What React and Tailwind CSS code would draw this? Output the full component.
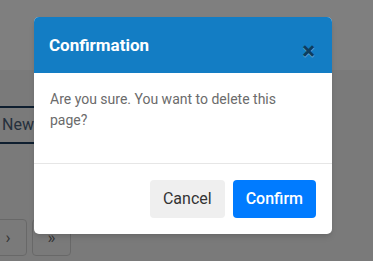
export default function App() {
  return (
    <div
      className="relative w-[373px] h-[261px] overflow-hidden bg-[#f5f5f5]"
      style={{ fontFamily: "Roboto, 'Liberation Sans', sans-serif" }}
    >
      {/* page behind the dialog */}
      <div className="h-[70px] bg-white"></div>
      <div className="pt-[36px]">
        <button className="ml-[-10px] h-[38px] pl-[10px] border-2 border-[#1d3c5e] rounded text-[16px] text-[#4a6079] bg-transparent w-[90px] text-left">
          New
        </button>
      </div>
      <div className="mt-[75px] flex gap-[5px]">
        <div className="ml-[-11px] w-[38px] h-[37px] border border-[#d0d0d0] rounded flex items-center justify-center text-[#6a6a6a] text-[17px]">
          ›
        </div>
        <div className="w-[39px] h-[37px] border border-[#d0d0d0] rounded flex items-center justify-center text-[#6a6a6a] text-[17px]">
          »
        </div>
      </div>

      {/* backdrop */}
      <div className="absolute inset-0 bg-black/50"></div>

      {/* dialog */}
      <div className="absolute left-[34px] top-[17px] w-[298px] bg-white rounded-[5px] overflow-hidden shadow-md">
        <div className="h-[56px] bg-[#137dc4] flex items-start px-[15px] pt-4">
          <h5 className="text-[17px] leading-[1.5] font-bold text-white">Confirmation</h5>
          <button className="ml-auto mt-[6px] mr-[2px] text-[24px] leading-none font-bold text-[#0d3d5f] [text-shadow:0_1px_0_rgba(255,255,255,0.35)]">
            ×
          </button>
        </div>
        <div className="p-4 border-b border-[#e6e6e6]">
          <p className="mb-4 text-[14px] leading-[21px] text-[#6b6b6b]">
            Are you sure. You want to delete this page?
          </p>
        </div>
        <div className="p-4 flex justify-end gap-2">
          <button className="h-[38px] px-[13px] rounded bg-[#efefef] text-[16px] text-[#333]">
            Cancel
          </button>
          <button className="h-[38px] px-[13px] rounded bg-[#007bff] text-[16px] font-medium text-white">
            Confirm
          </button>
        </div>
      </div>
    </div>
  );
}
